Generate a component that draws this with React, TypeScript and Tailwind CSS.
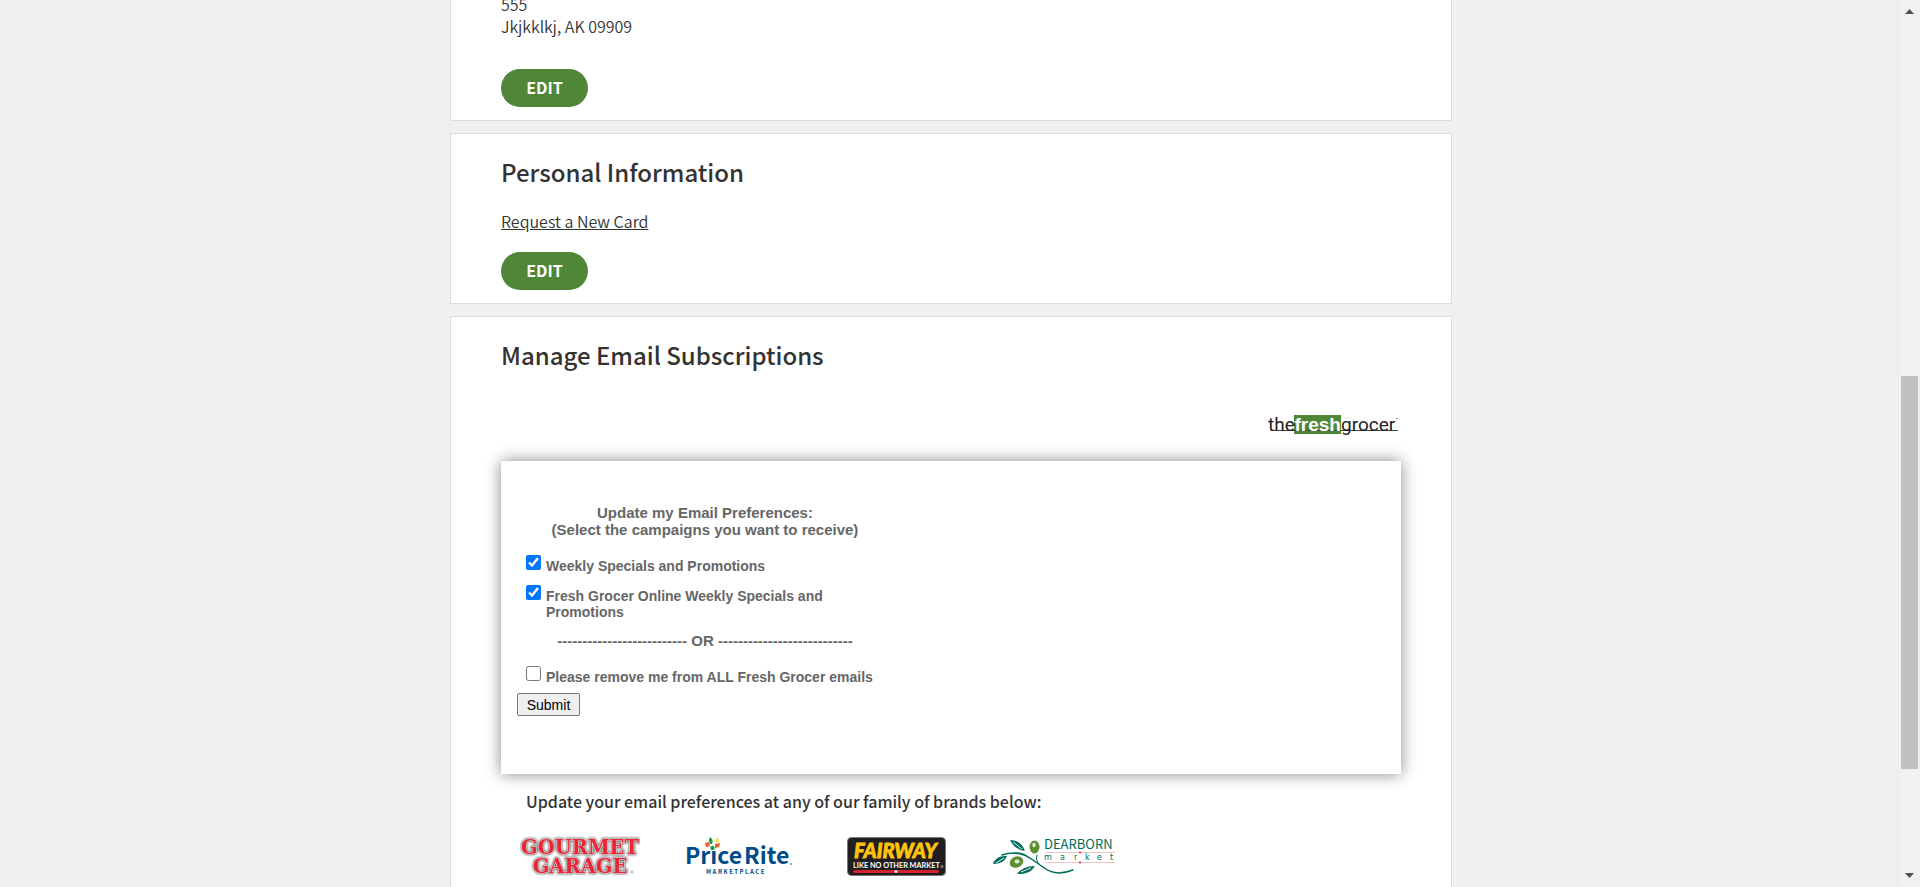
import { useState } from "react";
import type { ReactNode } from "react";

const panelClass = "border border-[#dcdcdc] bg-white px-[50px]";

function EditButton({ label }: { label: string }) {
  return (
    <button
      type="button"
      aria-label={label}
      className="flex h-[38px] w-[87px] items-center justify-center rounded-full bg-[#4f8637] pb-0.5 text-base leading-6 font-bold text-white"
    >
      EDIT
    </button>
  );
}

function Heading({ children }: { children: ReactNode }) {
  return <h2 className="text-2xl leading-8 font-medium text-[#333]">{children}</h2>;
}

function FreshGrocerLogo() {
  return (
    <svg width="130" height="30" viewBox="0 -5 130 30" role="img" aria-label="the fresh grocer">
      <rect x="26" y="0" width="47" height="19" fill="#4f8637" />
      <path d="M3 15.500H130" stroke="#444" strokeWidth="1" />
      <g fontFamily="Roboto, sans-serif" fontSize="19">
        <text x="0" y="16" fill="#222">the</text>
        <text x="26.500" y="16" fill="#fff" fontWeight="700" fontFamily="'Liberation Sans', sans-serif">fresh</text>
        <text x="73" y="16" fill="#222">grocer</text>
      </g>
      <circle cx="129" cy="3.500" r="0.800" fill="#777" />
    </svg>
  );
}

function GourmetGarageLogo() {
  return (
    <svg width="120" height="44" viewBox="0 -2 120 44" role="img" aria-label="Gourmet Garage">
      <g
        fill="#ee2435"
        stroke="#d8cccd"
        strokeWidth="1.600"
        paintOrder="stroke"
        fontFamily="'DejaVu Serif', serif"
        fontWeight="700"
        fontSize="19.500"
        textAnchor="middle"
        strokeLinejoin="round"
        className="drop-shadow-[0_0_1px_#222]"
      >
        <text x="60" y="17">GOURMET</text>
        <text x="60" y="36">GARAGE</text>
      </g>
      <circle cx="112" cy="35" r="1.200" fill="none" stroke="#888" strokeWidth="0.600" />
    </svg>
  );
}

function PriceRiteLogo() {
  return (
    <svg width="108" height="44" viewBox="0 -2 108 44" role="img" aria-label="Price Rite Marketplace">
      <g fill="#004b87" fontFamily="'Noto Sans CJK SC', sans-serif" fontWeight="700">
        <text x="0" y="27" fontSize="23">Price</text>
        <text x="59" y="27" fontSize="23">Rite</text>
        <text x="21" y="37" fontSize="6" letterSpacing="1.500">MARKETPLACE</text>
      </g>
      <circle cx="27.500" cy="10" r="3.600" fill="#fff" />
      <circle cx="27.500" cy="11" r="2.200" fill="#12a14b" />
      <path d="M25 7q-2-4 0-7q4 3 2 7z" fill="#12a14b" />
      <path d="M20 6l4-1 1 4-4 1z M30 7l5-1-1 4-4 1z" fill="#f15a24" />
      <path d="M29 5l4-5 1 5z" fill="#f4dd3c" />
      <circle cx="106" cy="27" r="0.800" fill="#004b87" />
    </svg>
  );
}

function FairwayLogo() {
  return (
    <svg width="99" height="40" viewBox="0 0 99 40" role="img" aria-label="Fairway, like no other market">
      <rect x="0.500" y="0.500" width="98" height="38" rx="4" fill="#211e1f" stroke="#777" />
      <text x="7" y="21" fill="#ffc20e" stroke="#ffc20e" strokeWidth="0.800" fontFamily="Lato, sans-serif" fontStyle="italic" fontWeight="900" fontSize="20">FAIRWAY</text>
      <text x="6" y="30.500" fill="#fff" fontFamily="Lato, sans-serif" fontWeight="700" fontSize="7.300">LIKE NO OTHER MARKET</text>
      <rect x="6" y="33" width="86" height="3" rx="1.500" fill="#d2202f" />
      <circle cx="49" cy="34.500" r="1.600" fill="#fff" />
      <circle cx="95" cy="29.500" r="1" fill="none" stroke="#fff" strokeWidth="0.500" />
    </svg>
  );
}

function DearbornLogo() {
  return (
    <svg width="124" height="44" viewBox="0 -4 124 44" role="img" aria-label="Dearborn Market">
      <g fill="#006c5b">
        <path d="M0 25q3-9 14-8q-3 8-14 8z" />
        <path d="M17 1q11 0 15 11q-10-1-15-11z" />
        <path d="M24 35q6-8 18-8q-5 9-18 8z" />
      </g>
      <g fill="none" stroke="#fff" strokeWidth="0.900">
        <path d="M3 24l8-5M20 3l9 7M28 33l10-4" />
      </g>
      <g fill="none" stroke="#006c5b" strokeWidth="1.500" strokeLinecap="round">
        <path d="M9 16q16-5 28 3q10 7 13 9q12 10 30 3" />
        <path d="M22 14q9-1 14 5M44 16q-2 5 2 9" strokeWidth="1" />
      </g>
      <ellipse cx="41.500" cy="8" rx="5" ry="6.500" fill="#5d8f32" />
      <ellipse cx="23.500" cy="23" rx="7" ry="5.500" fill="#5d8f32" transform="rotate(-25 23.500 23)" />
      <ellipse cx="41" cy="6" rx="1.700" ry="2.200" fill="#e4eed2" />
      <ellipse cx="24" cy="22.500" rx="2.500" ry="2" fill="#e4eed2" />
      <text x="51" y="10" fill="#006c5b" fontFamily="'Noto Sans CJK SC', sans-serif" fontSize="13">DEARBORN</text>
      <path d="M52 13.500h70M52 23.500h70" stroke="#e8a9ae" strokeWidth="0.700" />
      <circle cx="87" cy="13.500" r="1" fill="#d2202f" />
      <circle cx="87" cy="23.500" r="1" fill="#d2202f" />
      <text x="51 67 81 92 104 117" y="21" fill="#006c5b" fontFamily="'DejaVu Sans', sans-serif" fontSize="8">market</text>
    </svg>
  );
}

type CampaignProps = { id: string; label: string; checked: boolean; onChange: () => void };

function Campaign({ id, label, checked, onChange }: CampaignProps) {
  return (
    <div className="flex items-start gap-[5px] pl-[9px]">
      <input id={id} type="checkbox" checked={checked} onChange={onChange} className="size-[15px] shrink-0" />
      <label htmlFor={id} className="pt-[3px] text-sm leading-4 font-bold">
        {label}
      </label>
    </div>
  );
}

function PreferencesForm() {
  const [weekly, setWeekly] = useState(true);
  const [online, setOnline] = useState(true);
  const [remove, setRemove] = useState(false);
  return (
    <form
      onSubmit={(e) => e.preventDefault()}
      className="bg-white px-4 pt-[43px] pb-[58px] font-['Liberation_Sans',Arial,sans-serif] text-[#666] shadow-[0_0_15px_#888]"
    >
      <div className="max-w-[376px]">
        <p className="text-center text-[15px] leading-[17px] font-bold">
          Update my Email Preferences:
          <br />
          (Select the campaigns you want to receive)
        </p>
        <div className="mt-[17px] flex flex-col gap-[11px]">
          <Campaign id="weekly" label="Weekly Specials and Promotions" checked={weekly} onChange={() => setWeekly(!weekly)} />
          <Campaign id="online" label="Fresh Grocer Online Weekly Specials and Promotions" checked={online} onChange={() => setOnline(!online)} />
        </div>
        <p className="mt-3 mb-[17px] text-center text-[15px] leading-[17px] font-bold whitespace-nowrap">
          -------------------------- OR ---------------------------
        </p>
        <Campaign id="remove" label="Please remove me from ALL Fresh Grocer emails" checked={remove} onChange={() => setRemove(!remove)} />
      </div>
      <button type="submit" className="mt-2 flex h-[23px] w-[63px] items-center justify-center rounded-[2px] border border-[#767676] bg-[#efefef] text-sm leading-4 text-black">
        Submit
      </button>
    </form>
  );
}

function ScrollTrack() {
  return (
    <div aria-hidden="true" className="flex w-[22px] shrink-0 flex-col items-center border-l border-[#ececec] bg-[#f1f1f1] py-2">
      <svg width="9" height="6" viewBox="0 0 9 6"><path d="M0 6L4.500 1L9 6z" fill="#505050" /></svg>
      <div className="flex w-full flex-1 flex-col items-center">
        <div className="flex-[362]" />
        <div className="w-[17px] flex-[393] bg-[#c1c1c1]" />
        <div className="flex-[104]" />
      </div>
      <svg width="9" height="6" viewBox="0 0 9 6"><path d="M0 0L4.500 5L9 0z" fill="#505050" /></svg>
    </div>
  );
}

export default function App() {
  return (
    <div className="flex h-screen overflow-hidden bg-[#f0f0f0] font-['Noto_Sans_CJK_SC',sans-serif] text-base text-[#333]">
      <main className="flex min-w-0 flex-1 flex-col items-center overflow-hidden pr-4 pl-5">
        <div className="-mt-2 flex w-full max-w-[1002px] shrink-0 flex-col gap-3">
          <section className={`${panelClass} pb-[13px]`}>
            <address className="mb-8 leading-[22px] font-[350] not-italic">
              555
              <br />
              Jkjkklkj, AK 09909
            </address>
            <EditButton label="Edit address" />
          </section>

          <section className={`${panelClass} pt-[22px] pb-[13px]`}>
            <Heading>Personal Information</Heading>
            <a href="#new-card" className="mt-[21px] mb-[19px] block w-fit leading-6 font-[350] underline">
              Request a New Card
            </a>
            <EditButton label="Edit personal information" />
          </section>

          <section className={`${panelClass} pt-[22px] pb-12`}>
            <Heading>Manage Email Subscriptions</Heading>
            <div className="mt-[39px] mb-[21px] flex justify-end pr-[3px]">
              <FreshGrocerLogo />
            </div>
            <PreferencesForm />
            <p className="mt-[15px] pl-[25px] leading-6 font-medium">Update your email preferences at any of our family of brands below:</p>
            <nav aria-label="Family of brands" className="mt-[22px] flex items-center pl-[19px]">
              <a href="#gourmet-garage" className="mr-[45px]"><GourmetGarageLogo /></a>
              <a href="#price-rite" className="mr-[54px]"><PriceRiteLogo /></a>
              <a href="#fairway" className="mr-[47px]"><FairwayLogo /></a>
              <a href="#dearborn"><DearbornLogo /></a>
            </nav>
          </section>
        </div>
      </main>
      <ScrollTrack />
    </div>
  );
}
